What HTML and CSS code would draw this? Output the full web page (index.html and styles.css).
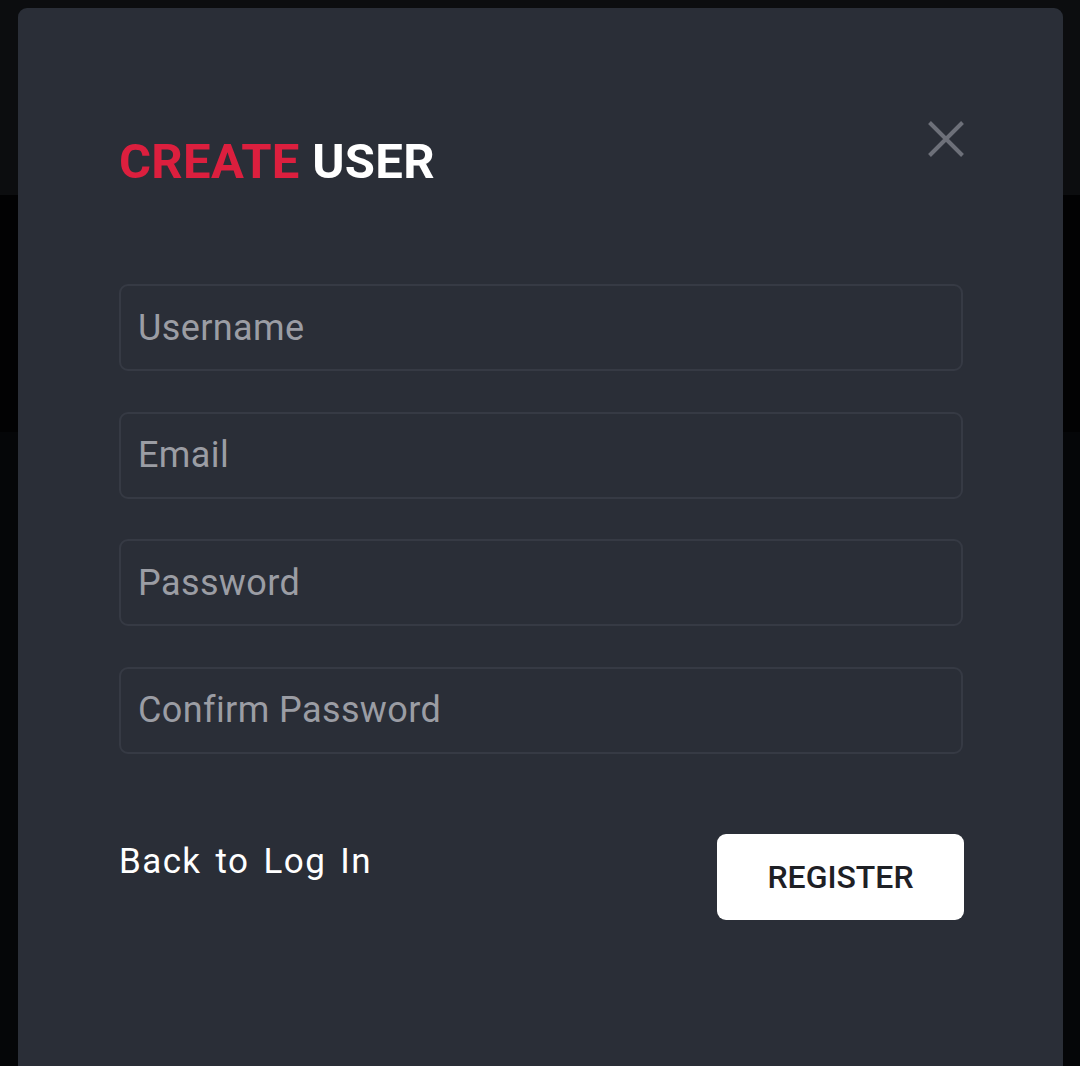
FILE: index.html
```html
<!DOCTYPE html>
<html>
<head>
<meta charset="utf-8">
<link rel="stylesheet" href="styles.css">
</head>
<body>
<div class="modal">
  <div class="header">
    <h1 class="title"><span class="accent">CREATE</span> USER</h1>
    <button class="close" aria-label="Close">
      <svg width="36" height="36" viewBox="0 0 36 36"><path d="M1.5 1.5L34.5 34.5M34.5 1.5L1.5 34.5" stroke="#6d7079" stroke-width="4" stroke-linecap="butt"/></svg>
    </button>
  </div>
  <form class="form">
    <input class="field" type="text" placeholder="Username">
    <input class="field" type="email" placeholder="Email">
    <input class="field" type="password" placeholder="Password">
    <input class="field" type="password" placeholder="Confirm Password">
    <div class="actions">
      <a class="back">Back to Log In</a>
      <button class="register" type="button">REGISTER</button>
    </div>
  </form>
</div>
</body>
</html>
```
FILE: styles.css
```css
html, body {
  margin: 0;
  height: 100%;
}
body {
  background: linear-gradient(to bottom, #0c0d0f 0, #0c0d0f 195px, #020203 195px, #020203 432px, #050608 432px);
  font-family: Roboto, "Noto Sans", sans-serif;
  overflow: hidden;
}
.modal {
  margin: 8px 17px 0 18px;
  background: #2a2e37;
  border-radius: 9px 9px 0 0;
  height: 1100px;
  box-sizing: border-box;
  padding: 102px 100px 0 101px;
}
.header {
  display: flex;
  justify-content: space-between;
  align-items: flex-start;
}
.title {
  margin: 24px 0 0 0;
  font-size: 49px;
  font-weight: 700;
  color: #ffffff;
  line-height: 56px;
  letter-spacing: 0.3px;
}
.accent { color: #dc1f3e; }
.close {
  background: none;
  border: 0;
  padding: 0;
  margin: 11px -1px 0 0;
  width: 36px;
  height: 36px;
  cursor: pointer;
}
.close svg { display: block; }
.form {
  margin-top: 94px;
  display: flex;
  flex-direction: column;
}
.field {
  box-sizing: border-box;
  height: 87px;
  margin-bottom: 40.5px;
  background: #2a2e37;
  border: 2px solid #363a44;
  border-radius: 9px;
  padding: 0 17px;
  font-family: Roboto, "Noto Sans", sans-serif;
  font-size: 36px;
  color: #fff;
  outline: none;
}
.field::placeholder { color: #9b9da4; letter-spacing: 0.4px; }
.actions {
  margin-top: 40px;
  display: flex;
  justify-content: space-between;
  align-items: flex-start;
}
.back {
  color: #ffffff;
  font-size: 35px;
  letter-spacing: 1.4px;
  word-spacing: 4px;
  line-height: 56px;
  cursor: pointer;
}
.register {
  width: 247px;
  height: 86px;
  margin-right: -1px;
  background: #ffffff;
  border: 0;
  border-radius: 9px;
  font-family: Roboto, "Noto Sans", sans-serif;
  font-weight: 500;
  font-size: 32px;
  color: #1e2025;
  cursor: pointer;
}
```
